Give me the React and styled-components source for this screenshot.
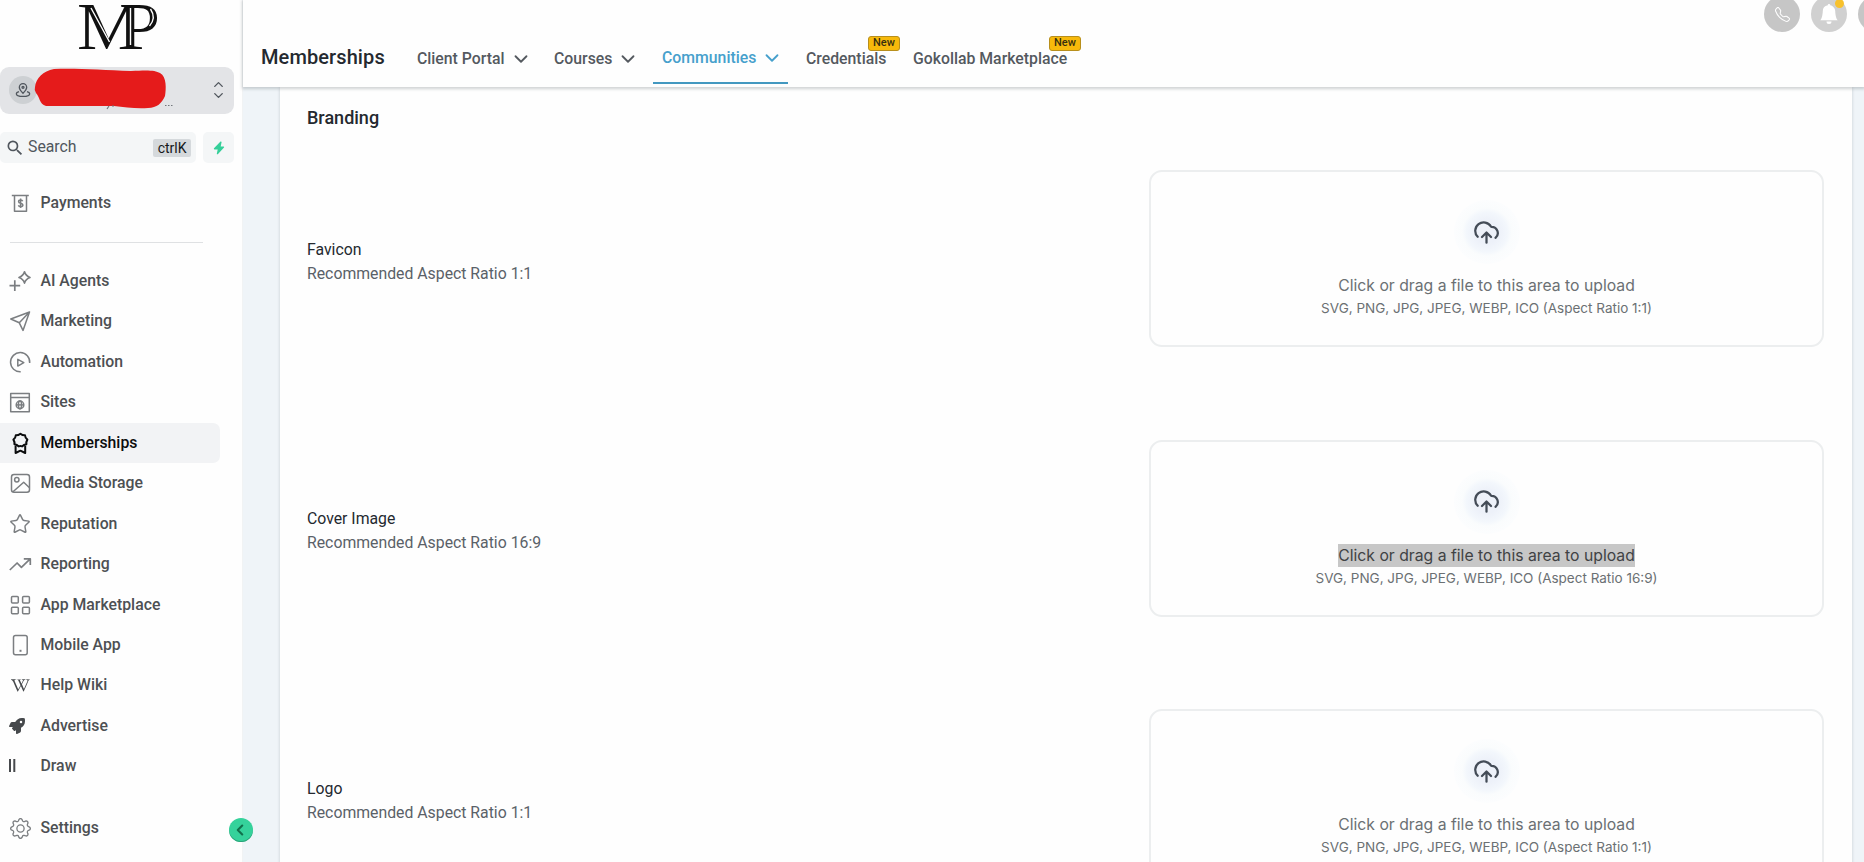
/* eslint-disable react/prop-types */
import styled, { createGlobalStyle } from 'styled-components';
import { BsBellFill, BsGear, BsTelephone } from 'react-icons/bs';
import { FaRocket, FaWikipediaW } from 'react-icons/fa';
import { MdSearch } from 'react-icons/md';
import { ChevronDown, ChevronLeft, ChevronUp, Star } from 'lucide-react';

const GlobalStyle = createGlobalStyle`
* {
    box-sizing: border-box;
}

body {
    margin: 0;
    overflow: hidden;
    background: #fff;
    font-family: Roboto, "Liberation Sans", sans-serif;
    color: #24292f;
}
`;

const Page = styled.div`
    display: grid;
    grid-template-columns: 243px 1fr;
    height: 862px;
    overflow: hidden;
`;

const Sidebar = styled.aside`
    position: relative;
    display: flex;
    flex-direction: column;
    border-right: 1px solid #f1f3f4;
    background: #fefefe;
`;

const LogoRow = styled.div`
    height: 67px;
    padding-left: 74px;
`;

const Account = styled.div`
    position: relative;
    display: flex;
    align-items: center;
    justify-content: space-between;
    width: 234px;
    height: 47px;
    padding: 0 8px 2px 9px;
    border-radius: 9px;
    background: #e3e4e7;
`;

const AccountIcon = styled.div`
    display: flex;
    align-items: center;
    justify-content: center;
    width: 28px;
    height: 28px;
    border-radius: 50%;
    background: #cdd0d3;
    color: #50565d;
`;

const Redaction = styled.svg`
    position: absolute;
    left: 34px;
    top: 1px;
`;

const Arrows = styled.div`
    display: flex;
    flex-direction: column;
    color: #50565d;

    & > svg + svg {
        margin-top: -4px;
    }
`;

const SearchRow = styled.div`
    display: flex;
    gap: 7px;
    height: 31px;
    margin-top: 18px;
`;

const SearchBox = styled.div`
    display: flex;
    align-items: center;
    width: 196px;
    padding: 0 5px 0 5px;
    border-radius: 5px;
    background: #f4f6f7;
    color: #50565d;
    font-size: 15.8px;
`;

const SearchLabel = styled.span`
    flex: 1;
    padding: 0 0 3px 3px;
`;

const Shortcut = styled.kbd`
    padding: 0 4.5px;
    border-radius: 2px;
    background: #d5d9dc;
    color: #15181b;
    font: 14px/18px Roboto, sans-serif;
`;

const Quick = styled.div`
    display: flex;
    align-items: center;
    justify-content: center;
    width: 31px;
    border-radius: 5px;
    background: #f4f6f7;
    color: #34cf99;
`;

const Nav = styled.nav`
    display: flex;
    flex-direction: column;
    margin-top: ${({ $top }) => $top}px;
`;

const NavItem = styled.a`
    display: flex;
    align-items: center;
    width: 220px;
    height: 40.45px;
    padding-left: 8px;
    border-radius: 0 7px 7px 0;
    background: ${({ $active }) => ($active ? '#f2f3f5' : 'transparent')};
    color: ${({ $active }) => ($active ? '#0c0d0e' : '#4d5053')};
    font-size: 15.8px;
    font-weight: 500;
    line-height: 20px;
`;

const NavIcon = styled.span`
    display: flex;
    width: 24px;
    height: 24px;
    margin-right: 8.5px;
    padding-left: ${({ $start }) => ($start ? 1 : 0)}px;
    align-items: center;
    justify-content: ${({ $start }) => ($start ? 'flex-start' : 'center')};
    color: ${({ $active, $dark }) => ($active ? '#0c0d0e' : $dark ? '#46494c' : '#7b7e81')};
`;

const Divider = styled.hr`
    width: 193px;
    margin: 19px 0 0 10px;
    border: 0;
    border-top: 1px solid #dfe1e3;
`;

const Collapse = styled.button`
    position: absolute;
    z-index: 2;
    left: 229px;
    top: 818px;
    display: flex;
    align-items: center;
    justify-content: center;
    width: 24px;
    height: 24px;
    padding: 0 2px 0 0;
    border: 0;
    border-radius: 50%;
    background: #35d29b;
    box-shadow: inset 0 -1px 0 #2b9f77;
    color: #11704c;
`;

const Main = styled.main`
    display: flex;
    flex-direction: column;
    min-width: 0;
    background: #eff4f8;
`;

const Topbar = styled.header`
    position: relative;
    z-index: 1;
    display: flex;
    justify-content: space-between;
    height: 87px;
    background: #fefefe;
    box-shadow: 0 1px 3px 1px rgba(80, 90, 95, 0.27);
`;

const Tabs = styled.div`
    display: flex;
    height: 84px;
    padding: 30px 0 0 18px;
`;

const Heading = styled.h1`
    width: 147px;
    margin: 0;
    font-size: 20px;
    font-weight: 500;
    line-height: 54px;
    letter-spacing: 0.1px;
`;

const Tab = styled.a`
    position: relative;
    display: flex;
    align-items: center;
    gap: 5px;
    width: ${({ $width }) => $width}px;
    height: 54px;
    margin-right: ${({ $gap }) => $gap || 0}px;
    padding: ${({ $active }) => ($active ? 4 : 3)}px 0 0 9px;
    border-bottom: ${({ $active }) => ($active ? '2px solid #4398c0' : '0')};
    color: ${({ $active }) => ($active ? '#46a0cc' : '#54595f')};
    font-size: 15.8px;
    font-weight: 500;
    line-height: 20px;
    white-space: nowrap;
`;

const Badge = styled.span`
    position: absolute;
    right: ${({ $right }) => $right}px;
    top: 6px;
    width: 32px;
    height: 15px;
    border: 1px solid #b88f1c;
    border-radius: 3px;
    background: #f7b90b;
    color: #38300f;
    font-size: 11px;
    font-weight: 500;
    line-height: 12px;
    text-align: center;
`;

const Actions = styled.div`
    display: flex;
    gap: 11px;
    margin: -4px -30px 0 0;
`;

const RoundButton = styled.button`
    position: relative;
    display: flex;
    align-items: center;
    justify-content: center;
    width: 36px;
    height: 36px;
    padding: 0;
    border: 0;
    border-radius: 50%;
    background: ${({ $light }) => ($light ? '#d0d0d0' : '#c6c6c6')};
    color: #fff;
`;

const Dot = styled.i`
    position: absolute;
    top: 3px;
    right: 3px;
    width: 9px;
    height: 9px;
    border-radius: 50%;
    background: #f8c12c;
`;

const Card = styled.section`
    flex: 1;
    min-height: 0;
    margin: 0 12px 0 37px;
    padding: 17px 28px 0 27px;
    background: #fefefe;
    box-shadow: 0 0 3px rgba(80, 90, 100, 0.25);
`;

const CardTitle = styled.h2`
    margin: 0 0 38px;
    font-size: 18px;
    font-weight: 500;
    line-height: 28px;
`;

const SettingRow = styled.div`
    display: flex;
    align-items: center;
    justify-content: space-between;
    height: 177px;
    margin-bottom: 92.5px;
`;

const Label = styled.div`
    padding-top: 6px;
    font-size: 15.8px;
    line-height: 23.6px;
`;

const Hint = styled.div`
    color: #5a6168;
`;

const UploadBox = styled.div`
    display: flex;
    flex-direction: column;
    align-items: center;
    width: 675px;
    height: 177px;
    padding-top: 28px;
    border: 2px solid #eceeef;
    border-radius: 13px;
    color: #6b7073;
    font-family: Inter, sans-serif;
`;

const Glow = styled.div`
    display: flex;
    align-items: center;
    justify-content: center;
    width: 66px;
    height: 64px;
    border-radius: 50%;
    background: radial-gradient(closest-side, #edf1f9 35%, #f3f7fc 62%, #fafcfd 75%, #fcfdfe 100%);
    color: #444c57;
`;

const UploadText = styled.div`
    height: 23px;
    margin-top: 10px;
    background: ${({ $selected }) => ($selected ? '#c7c7c7' : 'transparent')};
    color: ${({ $selected }) => ($selected ? '#404244' : 'inherit')};
    font-size: 15.75px;
    line-height: 23px;
`;

const FileTypes = styled.div`
    font-size: 13.5px;
    line-height: 22px;
`;

function Line({ children, width = 1.5 }) {
    return (
        <svg width="24" height="24" viewBox="0 0 24 24" fill="none" stroke="currentColor"
            strokeWidth={width} strokeLinejoin="round">
            {children}
        </svg>
    );
}

const icons = {
    payments: (
        <Line>
            <path d="M3.8 4.5h17M6.5 4.5v15.8h12V4.5" />
            <path d="M14.7 10.2c-.3-.8-1.1-1.1-2-1.1-1.2 0-2.1.6-2.1 1.6 0 2.3 4.3 1 4.3 3.3 0 1-1 1.7-2.2 1.7-1.1 0-2-.5-2.3-1.4M12.6 7.6v9.4" />
        </Line>
    ),
    agents: (
        <Line width={1.7}>
            <path d="M16.5 2.8c.9 3 2.2 4.4 5.5 5.7-3.3 1.2-4.6 2.5-5.5 5.6-.9-3.1-2.2-4.4-5.5-5.6 3.3-1.3 4.6-2.7 5.5-5.7zM6.8 11.2V22M1.5 16.6h10.7" />
        </Line>
    ),
    marketing: (
        <Line>
            <path d="M21.5 3 2.8 10l8.5 3.8L15 21.4zM21.5 3 11.3 13.8" />
        </Line>
    ),
    automation: (
        <Line>
            <path d="M12.7 21.8A9.6 9.6 0 1 1 21.7 13" />
            <path d="M9.8 9.3v6.8l6-3.4z" />
        </Line>
    ),
    sites: (
        <Line>
            <path d="M2.7 3.5h18.6v18.3H2.7zM2.7 7.6h18.6" />
            <circle cx="12" cy="14.9" r="3.8" />
            <ellipse cx="12" cy="14.9" rx="1.6" ry="3.8" />
            <path d="M8.2 14.9h7.6" />
        </Line>
    ),
    memberships: (
        <Line width={2}>
            <path d="M12.4 2.7q2 1.7 4.6 1.6.1 2.6 2.4 4.3-1.5 2.2-1 4.6-2.7.4-4.2 2.2-1.800-.8-3.600 0-1.500-1.800-4.200-2.200.5-2.400-1-4.600 2.300-1.700 2.400-4.300 2.600.1 4.600-1.600z" />
            <path d="M7.600 14.800v7.200l4.800-2.300 4.800 2.300v-7.200" />
        </Line>
    ),
    media: (
        <Line>
            <rect x="3.5" y="3.5" width="18" height="17.8" rx="2.5" />
            <circle cx="8.8" cy="8.7" r="2.2" />
            <path d="m5 20.8 10.7-9.6 5.8 5.5" />
        </Line>
    ),
    reputation: <Star size={22} strokeWidth={1.6} />,
    reporting: (
        <Line width={1.7}>
            <path d="m1.8 18 7.3-7 4.3 4.3 8.8-8.4M15.800 6.800h6.500v6.300" />
        </Line>
    ),
    apps: (
        <Line>
            <rect x="3.5" y="3.5" width="6.8" height="6.5" rx="1" />
            <rect x="14.6" y="3.5" width="6.8" height="6.5" rx="1" />
            <rect x="3.5" y="14.3" width="6.8" height="6.5" rx="1" />
            <rect x="14.6" y="14.3" width="6.8" height="6.5" rx="1" />
        </Line>
    ),
    mobile: (
        <Line>
            <rect x="5.5" y="2.4" width="13.7" height="19.4" rx="2" />
            <path d="M11.5 17.8h2" strokeWidth="2" />
        </Line>
    ),
    wiki: <FaWikipediaW size={19} />,
    advertise: <FaRocket size={16} />,
    draw: (
        <svg width="8" height="24" viewBox="0 0 8 24" fill="currentColor">
            <path d="M0 5h2v13H0zM4.3 5h2v13h-2z" />
        </svg>
    ),
    settings: <BsGear size={21} />,
};

const menu = [
    { label: 'AI Agents', icon: 'agents' },
    { label: 'Marketing', icon: 'marketing' },
    { label: 'Automation', icon: 'automation' },
    { label: 'Sites', icon: 'sites' },
    { label: 'Memberships', icon: 'memberships', active: true },
    { label: 'Media Storage', icon: 'media' },
    { label: 'Reputation', icon: 'reputation' },
    { label: 'Reporting', icon: 'reporting' },
    { label: 'App Marketplace', icon: 'apps' },
    { label: 'Mobile App', icon: 'mobile' },
    { label: 'Help Wiki', icon: 'wiki', dark: true },
    { label: 'Advertise', icon: 'advertise', dark: true, start: true },
    { label: 'Draw', icon: 'draw', dark: true, start: true },
];

const uploads = [
    { label: 'Favicon', ratio: '1:1' },
    { label: 'Cover Image', ratio: '16:9', selected: true },
    { label: 'Logo', ratio: '1:1' },
];

function MenuLink({ label, icon, active, dark, start }) {
    return (
        <NavItem $active={active}>
            <NavIcon $active={active} $dark={dark} $start={start}>{icons[icon]}</NavIcon>
            {label}
        </NavItem>
    );
}

function Logo() {
    return (
        <svg width="90" height="56" viewBox="0 0 90 56" overflow="visible">
            <g fontFamily="Liberation Serif" fontSize="67" fill="#111">
                <text x="3" y="48.5" textLength="64" lengthAdjust="spacingAndGlyphs">M</text>
                <text x="45" y="48.5" textLength="41" lengthAdjust="spacingAndGlyphs">P</text>
            </g>
            <path d="m17 8 18.500 34M56.500 8v37M76.500 9q6 9-1 17" stroke="#fff" strokeWidth="1.400" fill="none" />
        </svg>
    );
}

function SideMenu() {
    return (
        <Sidebar>
            <LogoRow><Logo /></LogoRow>
            <Account>
                <AccountIcon>
                    <svg width="16" height="16" viewBox="0 0 24 24" fill="none" stroke="currentColor" strokeWidth="2">
                        <path d="M12 17c3-3 5.5-5.5 5.5-9a5.5 5.5 0 0 0-11 0c0 3.5 2.5 6 5.5 9z" />
                        <circle cx="12" cy="8" r="1.5" />
                        <path d="M6 14.5c-2.4.7-4 1.7-4 3 0 2.3 4.5 4 10 4s10-1.7 10-4c0-1.3-1.6-2.3-4-3" />
                    </svg>
                </AccountIcon>
                <Redaction width="142" height="42" viewBox="0 0 142 42">
                    <path fill="#e51b1b" d="M1 19C2 10 9 3 20 1c22-1 48 1 77 2 16-1 24-1 29 2 7 4 6 16 5 23-3 7-8 12-17 12-12 1-23-1-34-2l-68 0C5 36 6 29 2 25Q0 22 1 19z" />
                    <path fill="none" stroke="#73777c" strokeWidth="1.2" d="m75 38-2 3m5-3h2M131 37.5h1.5m1.5 0h1.5m1.5 0h1.5" />
                </Redaction>
                <Arrows>
                    <ChevronUp size={15} strokeWidth={2.2} />
                    <ChevronDown size={15} strokeWidth={2.2} />
                </Arrows>
            </Account>
            <SearchRow>
                <SearchBox>
                    <MdSearch size={20} />
                    <SearchLabel>Search</SearchLabel>
                    <Shortcut>ctrlK</Shortcut>
                </SearchBox>
                <Quick>
                    <svg width="12" height="14" viewBox="0 0 12 14" fill="currentColor">
                        <path d="M7.5.5 1 7.2q-.6 1 .5 1.2h3.200l-.9 4.300q.1 1 1 .5L11 6.600q.6-1-.4-1.200H7.700l.9-4.300Q8.500.1 7.500.5z" />
                    </svg>
                </Quick>
            </SearchRow>
            <Nav $top={20}>
                <MenuLink label="Payments" icon="payments" />
            </Nav>
            <Divider />
            <Nav $top={17.4}>
                {menu.map((item) => <MenuLink key={item.label} {...item} />)}
            </Nav>
            <Nav $top={21.3}>
                <MenuLink label="Settings" icon="settings" />
            </Nav>
            <Collapse><ChevronLeft size={18} strokeWidth={2.8} /></Collapse>
        </Sidebar>
    );
}

function Header() {
    return (
        <Topbar>
            <Tabs>
                <Heading>Memberships</Heading>
                <Tab $width={137}>Client Portal <ChevronDown size={22} /></Tab>
                <Tab $width={108}>Courses <ChevronDown size={22} /></Tab>
                <Tab $width={135} $gap={9} $active>Communities <ChevronDown size={22} /></Tab>
                <Tab $width={107}>Credentials<Badge $right={4}>New</Badge></Tab>
                <Tab $width={177}>Gokollab Marketplace<Badge $right={0}>New</Badge></Tab>
            </Tabs>
            <Actions>
                <RoundButton><BsTelephone size={15} /></RoundButton>
                <RoundButton $light><BsBellFill size={20} /><Dot /></RoundButton>
                <RoundButton />
            </Actions>
        </Topbar>
    );
}

function UploadRow({ label, ratio, selected }) {
    return (
        <SettingRow>
            <Label>
                {label}
                <Hint>Recommended Aspect Ratio {ratio}</Hint>
            </Label>
            <UploadBox>
                <Glow>
                    <svg width="27" height="27" viewBox="0 0 24 24" fill="none" stroke="currentColor"
                        strokeWidth="2" strokeLinecap="round" strokeLinejoin="round">
                        <path d="M8 16l4-4 4 4M12 12v9M20 16.743A5.5 5.5 0 0 0 16.5 7a.62.62 0 0 1-.534-.302A7.5 7.5 0 1 0 4.187 15.794" />
                    </svg>
                </Glow>
                <UploadText $selected={selected}>Click or drag a file to this area to upload</UploadText>
                <FileTypes>SVG, PNG, JPG, JPEG, WEBP, ICO (Aspect Ratio {ratio})</FileTypes>
            </UploadBox>
        </SettingRow>
    );
}

function App() {
    return (
        <>
            <GlobalStyle />
            <Page>
                <SideMenu />
                <Main>
                    <Header />
                    <Card>
                        <CardTitle>Branding</CardTitle>
                        {uploads.map((item) => <UploadRow key={item.label} {...item} />)}
                    </Card>
                </Main>
            </Page>
        </>
    );
}

export default App;
